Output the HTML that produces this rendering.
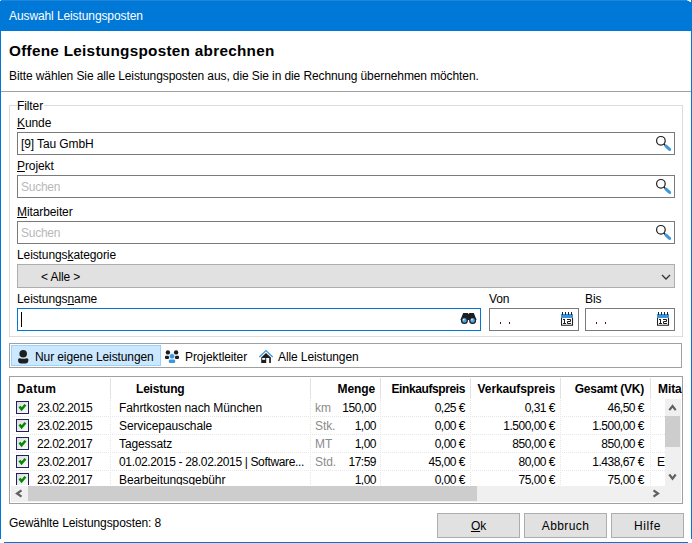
<!DOCTYPE html>
<html><head><meta charset="utf-8">
<style>
*{box-sizing:border-box;margin:0;padding:0}
html,body{width:692px;height:543px;overflow:hidden;background:#fff}
body{position:relative;font-family:"Liberation Sans",sans-serif;font-size:12px;letter-spacing:-0.1px;color:#000}
.a{position:absolute}
.t{position:absolute;white-space:nowrap;line-height:14px;height:14px}
.b{font-weight:bold}
.u{text-decoration:underline;text-underline-offset:1px}
.box{position:absolute;border:1px solid #7a7a7a;background:#fff}
.ph{color:#b8b8b8;letter-spacing:-0.25px}
.g{color:#8c8c8c}
.r{text-align:right}
.n{letter-spacing:-0.5px}
.hs{position:absolute;top:378px;width:1px;height:21px;background:#e2e2e2}
.vd{position:absolute;top:400px;width:1px;height:86px;background:repeating-linear-gradient(to bottom,#e6e6e6 0 1px,transparent 1px 2px)}
.hd{position:absolute;left:12px;width:653px;height:1px;background:repeating-linear-gradient(to right,#e6e6e6 0 1px,transparent 1px 2px)}
.cb{position:absolute;left:16px;width:13px;height:13px;border:1px solid #1f1f63;background:linear-gradient(135deg,#dcdcdc,#fbfbfb)}
.btn{position:absolute;top:513px;height:25px;border:1px solid #adadad;background:#e1e1e1;text-align:center;line-height:25px}
</style></head><body>
<!-- window frame -->
<div class="a" style="left:0;top:0;width:692px;height:31px;background:#0078d7;border-radius:1.5px 4px 0 0;border-top:1px solid #2086da"></div>
<div class="a" style="left:0;top:0;width:1px;height:539px;background:#0078d7"></div>
<div class="a" style="left:688px;top:0;width:4px;height:1px;background:#fff"></div><div class="a" style="left:690px;top:1px;width:2px;height:1px;background:#fff"></div><div class="a" style="left:691px;top:2px;width:1px;height:1px;background:#dbeaf8"></div><div class="a" style="left:687px;top:0;width:1px;height:1px;background:#9cc8ee"></div><div class="a" style="left:689px;top:1px;width:1px;height:1px;background:#9cc8ee"></div><div class="a" style="left:0;top:0;width:1px;height:1px;background:#cfe4f6"></div>
<div class="a" style="left:691px;top:0;width:1px;height:539px;background:#0078d7"></div>
<div class="a" style="left:4px;top:542px;width:684px;height:1px;background:#0078d7"></div>
<div class="t" style="left:9px;top:9px;color:#fff">Auswahl Leistungsposten</div>

<!-- header -->
<div class="t b" style="left:9px;top:42px;font-size:15.3px;letter-spacing:0.28px;line-height:18px;height:18px">Offene Leistungsposten abrechnen</div>
<div class="t" style="left:9px;top:69px">Bitte wählen Sie alle Leistungsposten aus, die Sie in die Rechnung übernehmen möchten.</div>
<div class="a" style="left:1px;top:91px;width:690px;height:1px;background:#a0a0a0"></div>

<!-- filter group -->
<div class="a" style="left:9px;top:105px;width:674px;height:232px;border:1px solid #dcdcdc"></div>
<div class="t" style="left:17px;top:99px;background:#fff;padding:0 1px 0 0">Filter</div>

<div class="t" style="left:17px;top:116px"><span class="u">K</span>unde</div>
<div class="box" style="left:17px;top:132px;width:658px;height:23px"></div>
<div class="t" style="left:21px;top:137px">[9] Tau GmbH</div>

<div class="t" style="left:17px;top:159px"><span class="u">P</span>rojekt</div>
<div class="box" style="left:17px;top:175px;width:658px;height:23px"></div>
<div class="t ph" style="left:21px;top:180px">Suchen</div>

<div class="t" style="left:17px;top:205px"><span class="u">M</span>itarbeiter</div>
<div class="box" style="left:17px;top:221px;width:658px;height:23px"></div>
<div class="t ph" style="left:21px;top:226px">Suchen</div>

<div class="t" style="left:17px;top:248px">Leistungs<span class="u">k</span>ategorie</div>
<div class="a" style="left:17px;top:264px;width:658px;height:24px;border:1px solid #adadad;background:#e1e1e1"></div>
<div class="t" style="left:41px;top:270px">&lt; Alle &gt;</div>

<div class="t" style="left:17px;top:292px">Leistungs<span class="u">n</span>ame</div>
<div class="box" style="left:17px;top:308px;width:464px;height:23px;border-color:#0078d7"></div>
<div class="a" style="left:21px;top:312px;width:1px;height:15px;background:#000"></div>

<div class="t" style="left:489px;top:292px">Von</div>
<div class="box" style="left:489px;top:308px;width:90px;height:23px"></div>
<div class="a" style="left:500px;top:322px;width:1px;height:2px;background:#4a1030"></div><div class="a" style="left:509px;top:322px;width:1px;height:2px;background:#4a1030"></div>
<div class="t" style="left:585px;top:292px">Bis</div>
<div class="box" style="left:585px;top:308px;width:90px;height:23px"></div>
<div class="a" style="left:596px;top:322px;width:1px;height:2px;background:#4a1030"></div><div class="a" style="left:605px;top:322px;width:1px;height:2px;background:#4a1030"></div>

<!-- toolbar -->
<div class="a" style="left:9px;top:343px;width:673px;height:25px;border:1px solid #a0a0a0"></div>
<div class="a" style="left:11px;top:345px;width:150px;height:21px;border:1px solid #99d1ff;background:#cce8ff"></div>
<div class="t" style="left:35px;top:350px">Nur eigene Leistungen</div>
<div class="t" style="left:185px;top:350px">Projektleiter</div>
<div class="t" style="left:278px;top:350px">Alle Leistungen</div>

<!-- table -->
<div class="a" style="left:9px;top:376px;width:674px;height:128px;border:1px solid #a0a0a0"></div>
<div class="hs" style="left:110px"></div>
<div class="hs" style="left:310px"></div>
<div class="hs" style="left:380px"></div>
<div class="hs" style="left:470px"></div>
<div class="hs" style="left:560px"></div>
<div class="hs" style="left:650px"></div>
<div class="t b" style="left:17px;top:382px;letter-spacing:0.4px">Datum</div>
<div class="t b" style="left:136px;top:382px;letter-spacing:-0.2px">Leistung</div>
<div class="t b r" style="left:300px;width:75px;top:382px">Menge</div>
<div class="t b r" style="left:380px;width:85px;top:382px;letter-spacing:-0.4px">Einkaufspreis</div>
<div class="t b r" style="left:470px;width:85px;top:382px">Verkaufspreis</div>
<div class="t b r" style="left:560px;width:84px;top:382px;letter-spacing:-0.25px">Gesamt (VK)</div>
<div class="a" style="left:651px;top:377px;width:31px;height:21px;overflow:hidden"><div class="t b" style="left:7px;top:5px">Mitarbeiter</div></div>

<div class="vd" style="left:110px"></div>
<div class="vd" style="left:310px"></div>
<div class="vd" style="left:380px"></div>
<div class="vd" style="left:470px"></div>
<div class="vd" style="left:560px"></div>
<div class="vd" style="left:650px"></div>
<div class="hd" style="top:416px"></div>
<div class="hd" style="top:434px"></div>
<div class="hd" style="top:452px"></div>
<div class="hd" style="top:470px"></div>

<!--ROWS-->
<div class="a" style="left:10px;top:399px;width:655px;height:86px;overflow:hidden">
<div class="cb" style="left:6px;top:2px"></div>
<svg class="a" style="left:8px;top:4px" width="10" height="10" viewBox="0 0 10 10"><path d="M1.5 3.5 L3.6 6.3 L7.4 1.8" stroke="#008a00" stroke-width="2.5" fill="none"/></svg>
<div class="t n" style="left:27px;top:2px">23.02.2015</div>
<div class="t" style="left:109px;top:2px;">Fahrtkosten nach München</div>
<div class="t g" style="left:305px;top:2px">km</div>
<div class="t r n" style="left:300px;width:66px;top:2px">150,00</div>
<div class="t r n" style="left:370px;width:85px;top:2px">0,25 €</div>
<div class="t r n" style="left:460px;width:85px;top:2px">0,31 €</div>
<div class="t r n" style="left:550px;width:84px;top:2px">46,50 €</div>
<div class="cb" style="left:6px;top:20px"></div>
<svg class="a" style="left:8px;top:22px" width="10" height="10" viewBox="0 0 10 10"><path d="M1.5 3.5 L3.6 6.3 L7.4 1.8" stroke="#008a00" stroke-width="2.5" fill="none"/></svg>
<div class="t n" style="left:27px;top:20px">23.02.2015</div>
<div class="t" style="left:109px;top:20px;">Servicepauschale</div>
<div class="t g" style="left:305px;top:20px">Stk.</div>
<div class="t r n" style="left:300px;width:66px;top:20px">1,00</div>
<div class="t r n" style="left:370px;width:85px;top:20px">0,00 €</div>
<div class="t r n" style="left:460px;width:85px;top:20px">1.500,00 €</div>
<div class="t r n" style="left:550px;width:84px;top:20px">1.500,00 €</div>
<div class="cb" style="left:6px;top:38px"></div>
<svg class="a" style="left:8px;top:40px" width="10" height="10" viewBox="0 0 10 10"><path d="M1.5 3.5 L3.6 6.3 L7.4 1.8" stroke="#008a00" stroke-width="2.5" fill="none"/></svg>
<div class="t n" style="left:27px;top:38px">22.02.2017</div>
<div class="t" style="left:109px;top:38px;">Tagessatz</div>
<div class="t g" style="left:305px;top:38px">MT</div>
<div class="t r n" style="left:300px;width:66px;top:38px">1,00</div>
<div class="t r n" style="left:370px;width:85px;top:38px">0,00 €</div>
<div class="t r n" style="left:460px;width:85px;top:38px">850,00 €</div>
<div class="t r n" style="left:550px;width:84px;top:38px">850,00 €</div>
<div class="cb" style="left:6px;top:56px"></div>
<svg class="a" style="left:8px;top:58px" width="10" height="10" viewBox="0 0 10 10"><path d="M1.5 3.5 L3.6 6.3 L7.4 1.8" stroke="#008a00" stroke-width="2.5" fill="none"/></svg>
<div class="t n" style="left:27px;top:56px">23.02.2017</div>
<div class="t" style="left:109px;top:56px;letter-spacing:-0.35px">01.02.2015 - 28.02.2015 | Software...</div>
<div class="t g" style="left:305px;top:56px">Std.</div>
<div class="t r n" style="left:300px;width:66px;top:56px">17:59</div>
<div class="t r n" style="left:370px;width:85px;top:56px">45,00 €</div>
<div class="t r n" style="left:460px;width:85px;top:56px">80,00 €</div>
<div class="t r n" style="left:550px;width:84px;top:56px">1.438,67 €</div>
<div class="t" style="left:647px;top:56px">E</div>
<div class="cb" style="left:6px;top:74px"></div>
<svg class="a" style="left:8px;top:76px" width="10" height="10" viewBox="0 0 10 10"><path d="M1.5 3.5 L3.6 6.3 L7.4 1.8" stroke="#008a00" stroke-width="2.5" fill="none"/></svg>
<div class="t n" style="left:27px;top:74px">23.02.2017</div>
<div class="t" style="left:109px;top:74px;">Bearbeitungsgebühr</div>
<div class="t g" style="left:305px;top:74px"></div>
<div class="t r n" style="left:300px;width:66px;top:74px">1,00</div>
<div class="t r n" style="left:370px;width:85px;top:74px">0,00 €</div>
<div class="t r n" style="left:460px;width:85px;top:74px">75,00 €</div>
<div class="t r n" style="left:550px;width:84px;top:74px">75,00 €</div>
</div>
<!--/ROWS-->
<!-- scrollbars -->
<div class="a" style="left:665px;top:399px;width:16px;height:103px;background:#f0f0f0"></div>
<div class="a" style="left:665px;top:416px;width:15px;height:31px;background:#cdcdcd"></div>
<div class="a" style="left:11px;top:486px;width:654px;height:16px;background:#f0f0f0"></div>
<div class="a" style="left:28px;top:486px;width:449px;height:15px;background:#cdcdcd"></div>
<svg class="a" style="left:660px;top:396px" width="24" height="100" viewBox="0 0 24 100">
<path d="M9.3 14.2 L12.5 10 L15.7 14.2" stroke="#606060" stroke-width="2.2" fill="none"/>
<path d="M9.3 78.5 L12.5 82.7 L15.7 78.5" stroke="#606060" stroke-width="2.2" fill="none"/>
</svg>
<svg class="a" style="left:0px;top:480px" width="700" height="24" viewBox="0 0 700 24">
<path d="M21.5 10.3 L17 13.5 L21.5 16.7" stroke="#606060" stroke-width="2.2" fill="none"/>
<path d="M653.5 10.3 L658 13.5 L653.5 16.7" stroke="#606060" stroke-width="2.2" fill="none"/>
</svg>

<!-- icons -->
<svg class="a" style="left:650px;top:132px" width="24" height="23" viewBox="0 132 24 23"><g transform="translate(-650 0)">
<circle cx="660.9" cy="140.8" r="4.3" stroke="#1e1e1e" stroke-width="1.2" fill="none"/>
<path d="M663.8 144.0 L665.6 145.8" stroke="#1e1e1e" stroke-width="1.4"/>
<path d="M666 146.2 L669.6 149.4" stroke="#3a96dd" stroke-width="3" stroke-linecap="round"/>
</g></svg>
<svg class="a" style="left:650px;top:175px" width="24" height="23" viewBox="0 175 24 23"><g transform="translate(-650 0)">
<circle cx="660.9" cy="183.8" r="4.3" stroke="#1e1e1e" stroke-width="1.2" fill="none"/>
<path d="M663.8 187.0 L665.6 188.8" stroke="#1e1e1e" stroke-width="1.4"/>
<path d="M666 189.2 L669.6 192.4" stroke="#3a96dd" stroke-width="3" stroke-linecap="round"/>
</g></svg>
<svg class="a" style="left:650px;top:221px" width="24" height="23" viewBox="0 221 24 23"><g transform="translate(-650 0)">
<circle cx="660.9" cy="229.8" r="4.3" stroke="#1e1e1e" stroke-width="1.2" fill="none"/>
<path d="M663.8 233.0 L665.6 234.8" stroke="#1e1e1e" stroke-width="1.4"/>
<path d="M666 235.2 L669.6 238.4" stroke="#3a96dd" stroke-width="3" stroke-linecap="round"/>
</g></svg>
<svg class="a" style="left:459px;top:311px" width="20" height="15" viewBox="459 311 20 15">
<path d="M463.2 313 L467.6 313 L468.5 314 L469.4 313 L473.8 313 L476.6 320 L460.4 320 Z" fill="#1e1e1e"/>
<circle cx="464.4" cy="320.4" r="2.9" fill="#4aa3e2" stroke="#1e1e1e" stroke-width="1.2"/>
<circle cx="472.6" cy="320.4" r="2.9" fill="#4aa3e2" stroke="#1e1e1e" stroke-width="1.2"/>
<circle cx="463.7" cy="319.6" r="0.9" fill="#d8ecfa"/>
<circle cx="471.9" cy="319.6" r="0.9" fill="#d8ecfa"/>
</svg>
<svg class="a" style="left:561px;top:312px" width="13" height="14" viewBox="0 0 13 14">
<rect x="0" y="2" width="12" height="4" fill="#3a96dd"/>
<rect x="1" y="0" width="1" height="3" fill="#222"/><rect x="4" y="0" width="1" height="3" fill="#222"/><rect x="7" y="0" width="1" height="3" fill="#222"/><rect x="10" y="0" width="1" height="3" fill="#222"/>
<path d="M0.5 6 V13.3 H11.5 V6" stroke="#1e1e1e" stroke-width="1.1" fill="#fff"/>
<path d="M2 7.5 H3.5 M3.5 7 V12 M2 11.5 H5" stroke="#1e1e1e" stroke-width="1" fill="none"/>
<path d="M6 7.5 H9.5 V9.5 H6.5 V11.5 H10" stroke="#1e1e1e" stroke-width="1" fill="none"/>
</svg>
<svg class="a" style="left:657px;top:312px" width="13" height="14" viewBox="0 0 13 14">
<rect x="0" y="2" width="12" height="4" fill="#3a96dd"/>
<rect x="1" y="0" width="1" height="3" fill="#222"/><rect x="4" y="0" width="1" height="3" fill="#222"/><rect x="7" y="0" width="1" height="3" fill="#222"/><rect x="10" y="0" width="1" height="3" fill="#222"/>
<path d="M0.5 6 V13.3 H11.5 V6" stroke="#1e1e1e" stroke-width="1.1" fill="#fff"/>
<path d="M2 7.5 H3.5 M3.5 7 V12 M2 11.5 H5" stroke="#1e1e1e" stroke-width="1" fill="none"/>
<path d="M6 7.5 H9.5 V9.5 H6.5 V11.5 H10" stroke="#1e1e1e" stroke-width="1" fill="none"/>
</svg>
<svg class="a" style="left:655px;top:268px" width="20" height="16" viewBox="655 268 20 16"><path d="M662 275 L666 279 L670 275" stroke="#333" stroke-width="1.3" fill="none"/></svg>
<svg class="a" style="left:16px;top:348px" width="14" height="18" viewBox="16 348 14 18">
<circle cx="23.2" cy="353.7" r="3.8" fill="#1e1e1e"/>
<path d="M18 359.6 Q18.3 358.2 20 358.2 Q23.2 359.4 26.4 358.2 Q28.1 358.2 28.4 359.6 L28.2 361.6 Q27.8 363.6 25.5 363.6 H20.9 Q18.6 363.6 18.2 361.6 Z" fill="#1e1e1e"/>
</svg>
<svg class="a" style="left:163px;top:348px" width="18" height="17" viewBox="163 348 18 17">
<circle cx="167.9" cy="352.4" r="2.2" fill="#1e1e1e"/>
<circle cx="176.1" cy="352.4" r="2.2" fill="#1e1e1e"/>
<rect x="165" y="355.8" width="4" height="3.2" rx="1" fill="#1e1e1e"/>
<rect x="175" y="355.8" width="4" height="3.2" rx="1" fill="#1e1e1e"/>
<circle cx="172" cy="356.3" r="2.7" fill="#3a96dd" stroke="#fff" stroke-width="0.6"/>
<rect x="168.8" y="359.6" width="6.4" height="3.3" rx="1.2" fill="#3a96dd"/>
</svg>
<svg class="a" style="left:257px;top:348px" width="18" height="17" viewBox="257 348 18 17">
<path d="M259.3 357 L266 350.6 L272.7 357" stroke="#3a96dd" stroke-width="1.3" fill="none"/>
<path d="M261.2 357.5 L266 353 L270.9 357.5 V363 H261.2 Z" fill="#1e1e1e"/>
<rect x="262.2" y="358" width="3" height="1.8" fill="#fff"/>
<rect x="266.2" y="358" width="3" height="5" fill="#fff"/>
</svg>

<!-- footer -->
<div class="t" style="left:9px;top:516px">Gewählte Leistungsposten: 8</div>
<div class="btn" style="left:437px;width:83px"><span class="u">O</span>k</div>
<div class="btn" style="left:524px;width:83px;letter-spacing:0.4px">Abbruch</div>
<div class="btn" style="left:611px;width:73px;letter-spacing:0.6px">Hilfe</div>
</body></html>
